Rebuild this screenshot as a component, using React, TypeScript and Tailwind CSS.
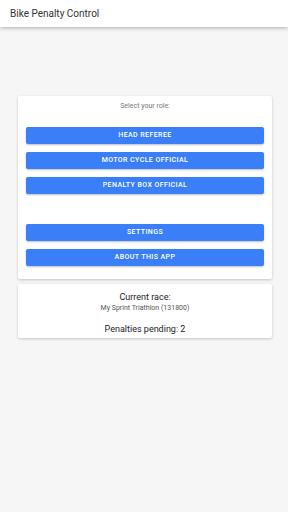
const ROLES = ["Head Referee", "Motor Cycle Official", "Penalty Box Official"];
const EXTRA = ["Settings", "About this app"];

function RoleButton({ label }: { label: string }) {
  return (
    <button className="h-[17px] w-full rounded-[2px] bg-[#3a7ff8] text-white text-[7px] font-medium uppercase tracking-[0.06em] leading-none shadow-[0_1px_2px_rgba(0,0,0,0.25)]">
      {label}
    </button>
  );
}

export default function App() {
  return (
    <div
      className="h-[512px] w-[288px] bg-[#f6f6f6] overflow-hidden"
      style={{ fontFamily: "Roboto, 'Liberation Sans', sans-serif" }}
    >
      {/* App bar */}
      <header className="h-[27px] flex items-center pl-[10px] bg-white shadow-[0_1px_4px_rgba(0,0,0,0.3)] relative z-10">
        <h1 className="text-[10px] text-[#333]">Bike Penalty Control</h1>
      </header>

      <main className="pl-[18px] pr-[16px] pt-[69px]">
        {/* Role card */}
        <section className="bg-white rounded-[2px] shadow-[0_1px_3px_rgba(0,0,0,0.2)] px-[8px] pt-[6px] pb-[13px]">
          <p className="text-center text-[7px] leading-[9px] text-[#777]">Select your role:</p>
          <div className="mt-[16px] flex flex-col gap-[8px]">
            {ROLES.map((r) => (
              <RoleButton key={r} label={r} />
            ))}
          </div>
          <div className="mt-[30px] flex flex-col gap-[8px]">
            {EXTRA.map((r) => (
              <RoleButton key={r} label={r} />
            ))}
          </div>
        </section>

        {/* Race card */}
        <section className="mt-[5px] bg-white rounded-[2px] shadow-[0_1px_3px_rgba(0,0,0,0.2)] pt-[7px] pb-[3px] text-center">
          <p className="text-[9px] leading-[12px] text-[#222]">Current race:</p>
          <p className="text-[7px] leading-[9px] text-[#555] mt-[1px]">My Sprint Triathlon (131800)</p>
          <p className="text-[9px] leading-[12px] text-[#222] mt-[10px]">Penalties pending: 2</p>
        </section>
      </main>
    </div>
  );
}
